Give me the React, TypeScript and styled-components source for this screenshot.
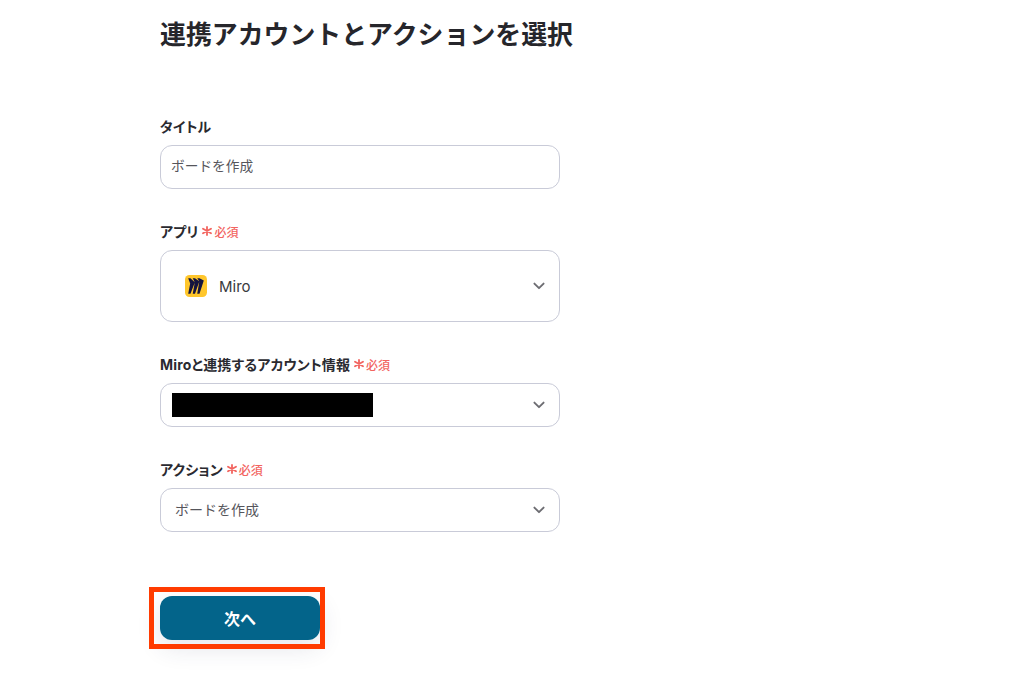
import React from "react";
import styled, { createGlobalStyle } from "styled-components";

const FONT = `Inter, "Noto Sans CJK JP", sans-serif`;

const GlobalStyle = createGlobalStyle`
  html, body {
    margin: 0;
    padding: 0;
    background: #fff;
  }
  body {
    font-family: ${FONT};
    overflow: hidden;
  }
`;

function Chevron() {
  return (
    <ChevronIcon width="12" height="8" viewBox="0 0 12 8" fill="none">
      <path d="M1.4 1.6 6 6.2l4.6-4.6" stroke="#6d6d72" strokeWidth="1.9" strokeLinecap="round" strokeLinejoin="round" />
    </ChevronIcon>
  );
}

function MiroLogo() {
  return (
    <svg width="22" height="22" viewBox="0 0 22 22">
      <rect width="22" height="22" rx="4.5" fill="#ffc62b" />
      <path
        transform="translate(3.2 3.2) scale(0.65)"
        d="M17.392 0H13.9L17 4.808 10.444 0H6.949l3.102 6.3L3.494 0H0l3.05 8.131L0 24h3.494L10.05 6.985 6.949 24h3.494L17 5.494 13.899 24h3.493L24 3.672 17.392 0z"
        fill="#14143f"
      />
    </svg>
  );
}

function Required() {
  return (
    <RequiredMark>
      <svg width="10" height="10" viewBox="0 0 10 10" stroke="#f2645f" strokeWidth="1.8" strokeLinecap="round">
        <path d="M5 .9v8.2M1 2.7l8 4.6M9 2.7 1 7.3" />
      </svg>
      必須
    </RequiredMark>
  );
}

export default function App() {
  return (
    <>
      <GlobalStyle />
      <Page>
        <Title>連携アカウントとアクションを選択</Title>
        <Form>
          <Field>
            <Label>タイトル</Label>
            <Box>
              <InputText>ボードを作成</InputText>
            </Box>
          </Field>
          <Field>
            <Label>
              アプリ
              <Required />
            </Label>
            <Box $tall>
              <AppValue>
                <MiroLogo />
                <AppName>Miro</AppName>
              </AppValue>
              <Chevron />
            </Box>
          </Field>
          <Field>
            <Label>
              Miroと連携するアカウント情報
              <Required />
            </Label>
            <Box>
              <Redacted />
              <Chevron />
            </Box>
          </Field>
          <Field>
            <Label>
              アクション
              <Required />
            </Label>
            <Box $select>
              <InputText $select>ボードを作成</InputText>
              <Chevron />
            </Box>
          </Field>
        </Form>
        <NextButton>次へ</NextButton>
      </Page>
    </>
  );
}

const Page = styled.div`
  width: 1028px;
  height: 692px;
  padding: 15px 0 0 160px;
  box-sizing: border-box;
  background: #fff;
`;

const Title = styled.h1`
  margin: 0;
  font-size: 25.9px;
  line-height: 40px;
  font-weight: 700;
  color: #26262b;
`;

const Form = styled.div`
  display: flex;
  flex-direction: column;
  gap: 32px;
  margin-top: 61px;
  width: 400px;
`;

const Field = styled.div`
  display: flex;
  flex-direction: column;
  gap: 9px;
`;

const Label = styled.div`
  display: flex;
  align-items: center;
  height: 20px;
  font-size: 14px;
  font-weight: 700;
  letter-spacing: 0.15px;
  font-feature-settings: "palt";
  color: #2a2a30;
`;

const RequiredMark = styled.span`
  display: inline-flex;
  align-items: center;
  gap: 2px;
  margin-left: 4px;
  font-size: 12px;
  font-weight: 500;
  letter-spacing: 0;
  font-feature-settings: normal;
  color: #f2645f;
`;

const Box = styled.div<{ $tall?: boolean; $select?: boolean }>`
  display: flex;
  align-items: center;
  justify-content: space-between;
  box-sizing: border-box;
  height: ${({ $tall }) => ($tall ? "72px" : "44px")};
  padding: 0 14px 0 ${({ $tall, $select }) => ($tall ? "24px" : $select ? "14px" : "10px")};
  background: #fff;
  border: 1px solid #c9cbd8;
  border-radius: 12px;
`;

const InputText = styled.span<{ $select?: boolean }>`
  margin-bottom: ${({ $select }) => ($select ? "2px" : "4px")};
  font-size: ${({ $select }) => ($select ? "14px" : "13.7px")};
  color: #55555b;
`;

const AppValue = styled.div`
  display: flex;
  align-items: center;
  gap: 12px;
`;

const AppName = styled.span`
  font-size: 15px;
  color: #3a3a40;
`;

const Redacted = styled.div`
  width: 201px;
  height: 24px;
  margin-left: 1px;
  background: #000;
`;

const ChevronIcon = styled.svg`
  flex: none;
  margin-left: auto;
`;

const NextButton = styled.button`
  position: relative;
  display: block;
  width: 160px;
  height: 44px;
  margin-top: 64px;
  padding: 0;
  border: 0;
  border-radius: 12px;
  background: #03648a;
  color: #fff;
  font-family: ${FONT};
  font-size: 16px;
  font-weight: 700;
  box-shadow: 0 8px 24px rgba(40, 50, 90, 0.12);

  &::after {
    content: "";
    position: absolute;
    inset: -9px -5px -9px -11px;
    border: 5px solid #ff3b00;
    box-sizing: border-box;
    pointer-events: none;
  }
`;
